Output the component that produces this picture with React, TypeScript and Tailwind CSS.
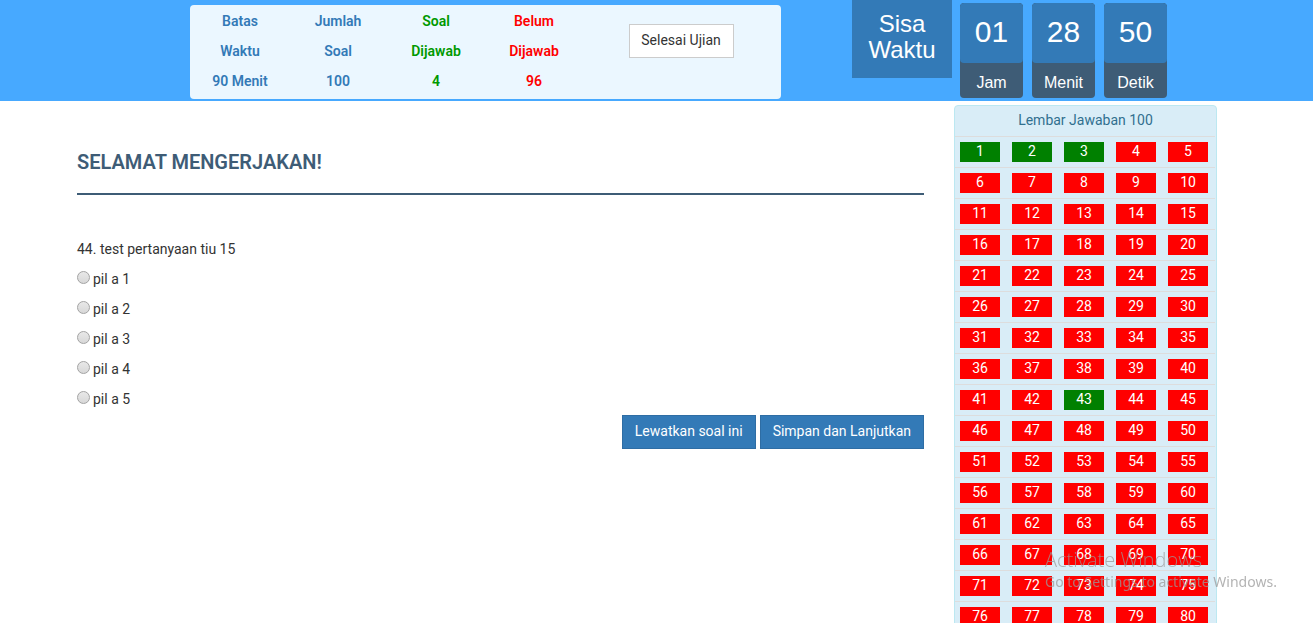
const stats = [
  { lines: ['Batas', 'Waktu', '90 Menit'], color: 'text-[#337ab7]' },
  { lines: ['Jumlah', 'Soal', '100'], color: 'text-[#337ab7]' },
  { lines: ['Soal', 'Dijawab', '4'], color: 'text-[#009900]' },
  { lines: ['Belum', 'Dijawab', '96'], color: 'text-[#ff0000]' },
];

const timer = [
  { value: '01', unit: 'Jam' },
  { value: '28', unit: 'Menit' },
  { value: '50', unit: 'Detik' },
];

const options = ['pil a 1', 'pil a 2', 'pil a 3', 'pil a 4', 'pil a 5'];
const answered = [1, 2, 3, 43];
const rows = Array.from({ length: 20 }, (_, r) => Array.from({ length: 5 }, (_, c) => r * 5 + c + 1));

function Header() {
  return (
    <header className="flex h-[101px] items-start bg-[#47a9ff] pr-[146px] pl-[190px]">
      <section className="mt-[5px] flex h-[94px] flex-1 rounded bg-[#ebf7ff] pt-px pl-px">
        {stats.map((s, i) => (
          <div key={i} className={`w-[98px] text-center leading-[30px] font-semibold ${s.color}`}>
            {s.lines.map((l) => (
              <p key={l}>{l}</p>
            ))}
          </div>
        ))}
        <div className="flex flex-1 justify-center pt-[18px] pr-0.5">
          <button className="h-[34px] w-[105px] border border-[#cccccc] bg-white pb-0.5 text-[#333333]">Selesai Ujian</button>
        </div>
      </section>
      <section className="ml-[71px] flex gap-2 font-['Liberation_Sans',Arial,sans-serif] text-white">
        <h3 className="h-[78px] w-[100px] bg-[#337ab7] pt-[11px] text-center text-2xl leading-[26px]">
          Sisa
          <br />
          Waktu
        </h3>
        <div className="flex gap-[9px] pt-[3px]">
          {timer.map((t) => (
            <div key={t.unit} className="w-[63px] overflow-hidden rounded bg-[#3e5c76] text-center">
              <div className="h-[60px] rounded bg-[#337ab7] text-3xl leading-[58px]">{t.value}</div>
              <div className="h-[35px] pt-0.5 text-base leading-[35px]">{t.unit}</div>
            </div>
          ))}
        </div>
      </section>
    </header>
  );
}

function Question() {
  return (
    <main className="min-w-0 flex-1">
      <h1 className="mt-[46px] h-[48px] border-b-2 border-[#3e5c76] text-xl leading-[30px] font-semibold text-[#3e5c76]">
        SELAMAT MENGERJAKAN!
      </h1>
      <form className="mt-[39px] leading-[30px]" onSubmit={(e) => e.preventDefault()}>
        <fieldset>
          <legend>44. test pertanyaan tiu 15</legend>
          {options.map((o) => (
            <label key={o} className="flex h-[30px] items-start gap-[3px]">
              <input
                type="radio"
                name="jawaban"
                className="mt-[7px] size-[13px] appearance-none rounded-full border border-[#a3a3a3] bg-linear-to-b from-[#e8e8e8] to-[#d8d8d8] checked:bg-[#337ab7]"
              />
              {o}
            </label>
          ))}
        </fieldset>
        <div className="mt-px flex justify-end gap-1 leading-5 text-white">
          <button type="button" className="h-[34px] border border-[#2e6da4] bg-[#337ab7] px-3 pb-0.5">
            Lewatkan soal ini
          </button>
          <button type="submit" className="h-[34px] border border-[#2e6da4] bg-[#337ab7] px-3 pb-0.5">
            Simpan dan Lanjutkan
          </button>
        </div>
      </form>
    </main>
  );
}

function AnswerSheet() {
  return (
    <aside className="mt-1 w-[263px] shrink-0 rounded border border-[#bce8f1] bg-[#d9edf7]">
      <h2 className="h-[30px] text-center leading-7 text-[#31708f]">Lembar Jawaban 100</h2>
      <table className="w-[260px] table-fixed border-separate border-spacing-0">
        <tbody>
          {rows.map((row) => (
            <tr key={row[0]}>
              {row.map((n) => (
                <td key={n} className="h-[31px] border-t border-[#dddddd] py-[5px] pr-[7px] pl-[5px]">
                  <button
                    className={`block h-5 w-10 pb-0.5 text-center leading-[18px] text-white ${answered.includes(n) ? 'bg-[#008000]' : 'bg-[#ff0000]'}`}
                  >
                    {n}
                  </button>
                </td>
              ))}
            </tr>
          ))}
        </tbody>
      </table>
    </aside>
  );
}

export default function App() {
  return (
    <div className="h-screen overflow-y-auto bg-white font-[Roboto,sans-serif] text-sm text-[#333333] [scrollbar-width:none]">
      <Header />
      <div className="flex items-start gap-[30px] pr-24 pl-[77px]">
        <Question />
        <AnswerSheet />
      </div>
      <div className="pointer-events-none fixed right-8 bottom-[31px] w-[236px] font-['Open_Sans',sans-serif] whitespace-nowrap text-[#999999]/75">
        <p className="text-xl leading-6 font-light">Activate Windows</p>
        <p className="font-['Noto_Sans',sans-serif] text-sm leading-5">Go to Settings to activate Windows.</p>
      </div>
    </div>
  );
}
